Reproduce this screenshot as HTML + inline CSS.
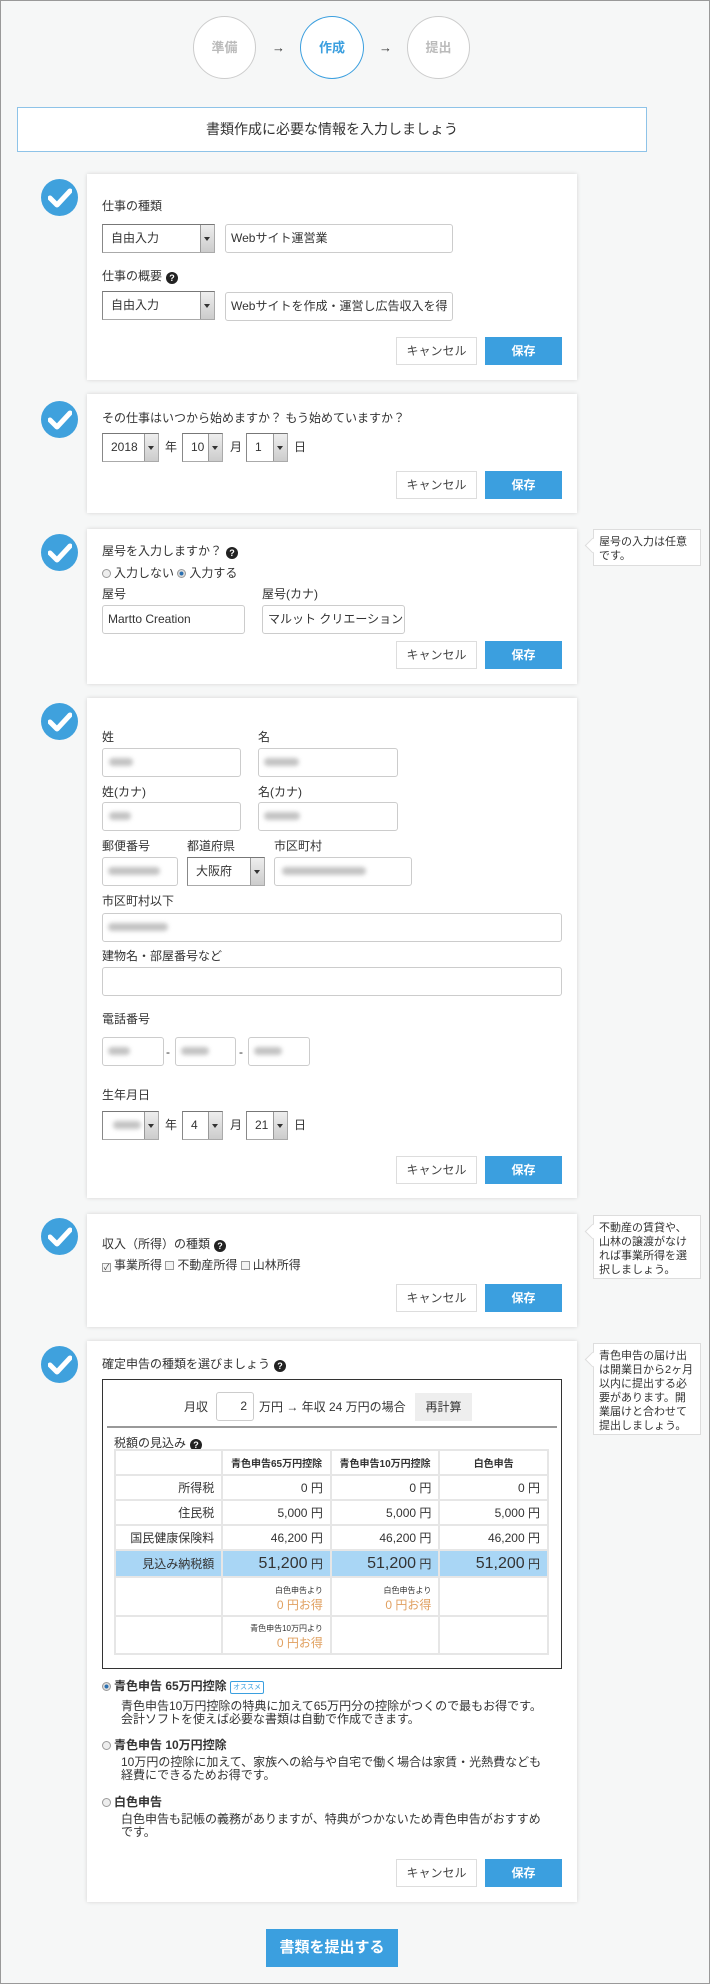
<!DOCTYPE html>
<html><head><meta charset="utf-8">
<style>
*{box-sizing:border-box;margin:0;padding:0}
body{width:710px;height:1984px;position:relative;background:#f6f7f7;font-family:"Liberation Sans","Noto Sans CJK JP",sans-serif;color:#333;overflow:hidden;border:1px solid #999;}
.a{position:absolute}
.t{position:absolute;font-size:12px;line-height:14px;white-space:nowrap}
.card{position:absolute;left:86px;width:490px;background:#fff;box-shadow:0 0 4px rgba(0,0,0,.14)}
.chk{position:absolute;left:40px;width:37px;height:37px;border-radius:50%;background:#3fa1dd}
.chk svg{position:absolute;left:7px;top:8px}
.inp{position:absolute;height:29px;border:1px solid #ccc;border-radius:3px;background:#fff;font-size:12px;line-height:27px;padding-left:5px;white-space:nowrap;overflow:hidden}
.sel{position:absolute;height:29px;border:1px solid #aaa;border-top-color:#777;border-left-color:#888;background:#fff;font-size:12px;line-height:27px;padding-left:8px}
.sel:after{content:"";position:absolute;right:0;top:0;width:13px;height:27px;background:linear-gradient(#eee,#ccc);border-left:1px solid #999}
.sel:before{content:"";position:absolute;right:4px;top:12px;border:3px solid transparent;border-top:4px solid #333;z-index:2}
.bc{position:absolute;width:81px;height:28px;border:1px solid #ddd;background:#fff;font-size:12px;line-height:26px;text-align:center;color:#444}
.bs{position:absolute;width:77px;height:28px;background:#3b9fdf;color:#fff;font-size:12px;font-weight:bold;line-height:28px;text-align:center}
.q{display:inline-block;width:12px;height:12px;border-radius:50%;background:#222;color:#fff;font-size:9px;line-height:12px;text-align:center;font-weight:bold;vertical-align:-1px;margin-left:4px}
.blur{position:absolute;background:#aaa;filter:blur(2px);height:8px;border-radius:4px;opacity:.7}
.tip{position:absolute;left:592px;width:108px;background:#fff;border:1px solid #ddd;font-size:11px;line-height:14px;padding:5px 5px;color:#333}
.tip:before{content:"";position:absolute;left:-7px;top:10px;width:10px;height:10px;background:#fff;border-left:1px solid #ddd;border-bottom:1px solid #ddd;transform:rotate(45deg)}
.rad{display:inline-block;width:9px;height:9px;border-radius:50%;border:1px solid #999;background:#eee;vertical-align:-1px;margin-right:3px}
.rad.on{background:radial-gradient(#2a6fb0 35%,#ddd 45%)}
.cb{display:inline-block;width:9px;height:9px;border:1px solid #999;background:#f4f4f4;vertical-align:-1px;margin-right:3px;font-size:8px;line-height:8px;text-align:center}
table{position:absolute;left:113px;top:1448px;width:435px;border-collapse:collapse;font-size:12px}
td{border:2px solid #e6e6e6;height:25px;text-align:right;padding-right:7px;width:109px}
td:first-child{width:108px}
</style></head><body>
<svg width="0" height="0" style="position:absolute"><defs><symbol id="ck" viewBox="0 0 24 22"><path d="M2 11 L9 18 L22 4" stroke="#fff" stroke-width="5" fill="none" stroke-linecap="round" stroke-linejoin="round"/></symbol></defs></svg>

<div class="a" style="left:192px;top:15px;width:63px;height:63px;border:1px solid #ccc;border-radius:50%;background:#fff;text-align:center;line-height:61px;font-size:13px;font-weight:bold;color:#bbb">準備</div>
<div class="t" style="left:271px;top:40px;font-size:13px">→</div>
<div class="a" style="left:299px;top:15px;width:64px;height:63px;border:1px solid #3b9fdf;border-radius:50%;background:#fff;text-align:center;line-height:61px;font-size:13px;font-weight:bold;color:#3b9fdf">作成</div>
<div class="t" style="left:378px;top:40px;font-size:13px">→</div>
<div class="a" style="left:406px;top:15px;width:63px;height:63px;border:1px solid #ccc;border-radius:50%;background:#fff;text-align:center;line-height:61px;font-size:13px;font-weight:bold;color:#bbb">提出</div>

<div class="a" style="left:16px;top:106px;width:630px;height:45px;border:1px solid #8ec3e8;background:#fff;text-align:center;line-height:43px;font-size:14px">書類作成に必要な情報を入力しましょう</div>

<div class="card" style="top:173px;height:206px"></div>
<div class="chk" style="top:178px"><svg width="24" height="22"><use href="#ck"/></svg></div>
<div class="t" style="left:101px;top:198px">仕事の種類</div>
<div class="sel" style="left:101px;top:223px;width:113px">自由入力</div>
<div class="inp" style="left:224px;top:223px;width:228px">Webサイト運営業</div>
<div class="t" style="left:101px;top:268px">仕事の概要<span class="q">?</span></div>
<div class="sel" style="left:101px;top:290px;width:113px">自由入力</div>
<div class="inp" style="left:224px;top:291px;width:228px">Webサイトを作成・運営し広告収入を得</div>
<div class="bc" style="left:395px;top:336px">キャンセル</div>
<div class="bs" style="left:484px;top:336px">保存</div>

<div class="card" style="top:393px;height:119px"></div>
<div class="chk" style="top:400px"><svg width="24" height="22"><use href="#ck"/></svg></div>
<div class="t" style="left:101px;top:410px">その仕事はいつから始めますか？ もう始めていますか？</div>
<div class="sel" style="left:101px;top:432px;width:57px">2018</div>
<div class="t" style="left:164px;top:439px">年</div>
<div class="sel" style="left:181px;top:432px;width:41px">10</div>
<div class="t" style="left:229px;top:439px">月</div>
<div class="sel" style="left:245px;top:432px;width:42px">1</div>
<div class="t" style="left:293px;top:439px">日</div>
<div class="bc" style="left:395px;top:470px">キャンセル</div>
<div class="bs" style="left:484px;top:470px">保存</div>

<div class="card" style="top:528px;height:155px"></div>
<div class="chk" style="top:533px"><svg width="24" height="22"><use href="#ck"/></svg></div>
<div class="t" style="left:101px;top:543px">屋号を入力しますか？<span class="q">?</span></div>
<div class="t" style="left:101px;top:565px"><span class="rad"></span>入力しない <span class="rad on"></span>入力する</div>
<div class="t" style="left:101px;top:586px">屋号</div>
<div class="t" style="left:261px;top:586px">屋号(カナ)</div>
<div class="inp" style="left:101px;top:604px;width:143px">Martto Creation</div>
<div class="inp" style="left:261px;top:604px;width:143px">マルット クリエーション</div>
<div class="bc" style="left:395px;top:640px">キャンセル</div>
<div class="bs" style="left:484px;top:640px">保存</div>
<div class="tip" style="top:528px;height:37px">屋号の入力は任意です。</div>

<div class="card" style="top:697px;height:500px"></div>
<div class="chk" style="top:702px"><svg width="24" height="22"><use href="#ck"/></svg></div>
<div class="t" style="left:101px;top:729px">姓</div>
<div class="t" style="left:257px;top:729px">名</div>
<div class="inp" style="left:101px;top:747px;width:139px"></div><div class="blur" style="left:108px;top:757px;width:24px"></div>
<div class="inp" style="left:257px;top:747px;width:140px"></div><div class="blur" style="left:263px;top:757px;width:35px"></div>
<div class="t" style="left:101px;top:784px">姓(カナ)</div>
<div class="t" style="left:257px;top:784px">名(カナ)</div>
<div class="inp" style="left:101px;top:801px;width:139px"></div><div class="blur" style="left:108px;top:811px;width:22px"></div>
<div class="inp" style="left:257px;top:801px;width:140px"></div><div class="blur" style="left:263px;top:811px;width:36px"></div>
<div class="t" style="left:101px;top:838px">郵便番号</div>
<div class="t" style="left:186px;top:838px">都道府県</div>
<div class="t" style="left:273px;top:838px">市区町村</div>
<div class="inp" style="left:101px;top:856px;width:76px"></div><div class="blur" style="left:107px;top:866px;width:52px"></div>
<div class="sel" style="left:186px;top:856px;width:78px">大阪府</div>
<div class="inp" style="left:273px;top:856px;width:138px"></div><div class="blur" style="left:281px;top:866px;width:84px"></div>
<div class="t" style="left:101px;top:893px">市区町村以下</div>
<div class="inp" style="left:101px;top:912px;width:460px"></div><div class="blur" style="left:107px;top:922px;width:60px"></div>
<div class="t" style="left:101px;top:948px">建物名・部屋番号など</div>
<div class="inp" style="left:101px;top:966px;width:460px"></div>
<div class="t" style="left:101px;top:1011px">電話番号</div>
<div class="inp" style="left:101px;top:1036px;width:62px"></div><div class="blur" style="left:107px;top:1046px;width:22px"></div>
<div class="t" style="left:165px;top:1044px">-</div>
<div class="inp" style="left:174px;top:1036px;width:61px"></div><div class="blur" style="left:180px;top:1046px;width:28px"></div>
<div class="t" style="left:238px;top:1044px">-</div>
<div class="inp" style="left:247px;top:1036px;width:62px"></div><div class="blur" style="left:253px;top:1046px;width:28px"></div>
<div class="t" style="left:101px;top:1087px">生年月日</div>
<div class="sel" style="left:101px;top:1110px;width:57px"></div><div class="blur" style="left:112px;top:1120px;width:28px"></div>
<div class="t" style="left:164px;top:1117px">年</div>
<div class="sel" style="left:181px;top:1110px;width:41px">4</div>
<div class="t" style="left:229px;top:1117px">月</div>
<div class="sel" style="left:245px;top:1110px;width:42px">21</div>
<div class="t" style="left:293px;top:1117px">日</div>
<div class="bc" style="left:395px;top:1155px">キャンセル</div>
<div class="bs" style="left:484px;top:1155px">保存</div>

<div class="card" style="top:1213px;height:113px"></div>
<div class="chk" style="top:1217px"><svg width="24" height="22"><use href="#ck"/></svg></div>
<div class="t" style="left:101px;top:1236px">収入（所得）の種類<span class="q">?</span></div>
<div class="t" style="left:101px;top:1257px"><span class="cb">✓</span>事業所得 <span class="cb"></span>不動産所得 <span class="cb"></span>山林所得</div>
<div class="bc" style="left:395px;top:1283px">キャンセル</div>
<div class="bs" style="left:484px;top:1283px">保存</div>
<div class="tip" style="top:1214px;height:64px">不動産の賃貸や、山林の譲渡がなければ事業所得を選択しましょう。</div>

<div class="card" style="top:1340px;height:561px"></div>
<div class="chk" style="top:1345px"><svg width="24" height="22"><use href="#ck"/></svg></div>
<div class="t" style="left:101px;top:1356px">確定申告の種類を選びましょう<span class="q">?</span></div>
<div class="a" style="left:101px;top:1378px;width:460px;height:290px;border:1px solid #333;background:#fff"></div>
<div class="t" style="left:183px;top:1399px">月収</div>
<div class="inp" style="left:215px;top:1391px;width:38px;text-align:right;padding-right:6px">2</div>
<div class="t" style="left:258px;top:1399px">万円 → 年収 24 万円の場合</div>
<div class="a" style="left:414px;top:1392px;width:57px;height:28px;background:#eee;font-size:12px;line-height:28px;text-align:center">再計算</div>
<div class="a" style="left:106px;top:1425px;width:450px;height:2px;background:#999"></div>
<div class="t" style="left:113px;top:1435px">税額の見込み<span class="q">?</span></div>
<table>
<tr style="font-weight:bold;font-size:10px"><td></td><td style="text-align:center;padding:0">青色申告65万円控除</td><td style="text-align:center;padding:0">青色申告10万円控除</td><td style="text-align:center;padding:0">白色申告</td></tr>
<tr><td>所得税</td><td>0 円</td><td>0 円</td><td>0 円</td></tr>
<tr><td>住民税</td><td>5,000 円</td><td>5,000 円</td><td>5,000 円</td></tr>
<tr><td>国民健康保険料</td><td>46,200 円</td><td>46,200 円</td><td>46,200 円</td></tr>
<tr style="background:#a9d6f5;height:27px"><td>見込み納税額</td><td><b style="font-size:16px;font-weight:normal">51,200</b> 円</td><td><b style="font-size:16px;font-weight:normal">51,200</b> 円</td><td><b style="font-size:16px;font-weight:normal">51,200</b> 円</td></tr>
<tr style="height:39px"><td></td><td style="line-height:14px"><span style="font-size:8px">白色申告より</span><br><span style="color:#e0a060">0 円お得</span></td><td style="line-height:14px"><span style="font-size:8px">白色申告より</span><br><span style="color:#e0a060">0 円お得</span></td><td></td></tr>
<tr style="height:38px"><td></td><td style="line-height:14px"><span style="font-size:8px">青色申告10万円より</span><br><span style="color:#e0a060">0 円お得</span></td><td></td><td></td></tr>
</table>
<div class="t" style="left:101px;top:1678px;font-weight:bold"><span class="rad on"></span>青色申告 65万円控除 <span style="display:inline-block;border:1px solid #3b9fdf;border-radius:2px;color:#3b9fdf;font-size:7px;line-height:11px;padding:0 2px;font-weight:normal;vertical-align:1px">オススメ</span></div>
<div class="t" style="left:120px;top:1699px;line-height:13px">青色申告10万円控除の特典に加えて65万円分の控除がつくので最もお得です。<br>会計ソフトを使えば必要な書類は自動で作成できます。</div>
<div class="t" style="left:101px;top:1737px;font-weight:bold"><span class="rad"></span>青色申告 10万円控除</div>
<div class="t" style="left:120px;top:1755px;line-height:13px">10万円の控除に加えて、家族への給与や自宅で働く場合は家賃・光熱費なども<br>経費にできるためお得です。</div>
<div class="t" style="left:101px;top:1794px;font-weight:bold"><span class="rad"></span>白色申告</div>
<div class="t" style="left:120px;top:1812px;line-height:13px">白色申告も記帳の義務がありますが、特典がつかないため青色申告がおすすめ<br>です。</div>
<div class="bc" style="left:395px;top:1858px">キャンセル</div>
<div class="bs" style="left:484px;top:1858px">保存</div>
<div class="tip" style="top:1342px;height:92px">青色申告の届け出は開業日から2ヶ月以内に提出する必要があります。開業届けと合わせて提出しましょう。</div>

<div class="a" style="left:265px;top:1928px;width:132px;height:38px;background:#3b9fdf;color:#fff;font-size:15px;font-weight:bold;line-height:38px;text-align:center">書類を提出する</div>
</body></html>
